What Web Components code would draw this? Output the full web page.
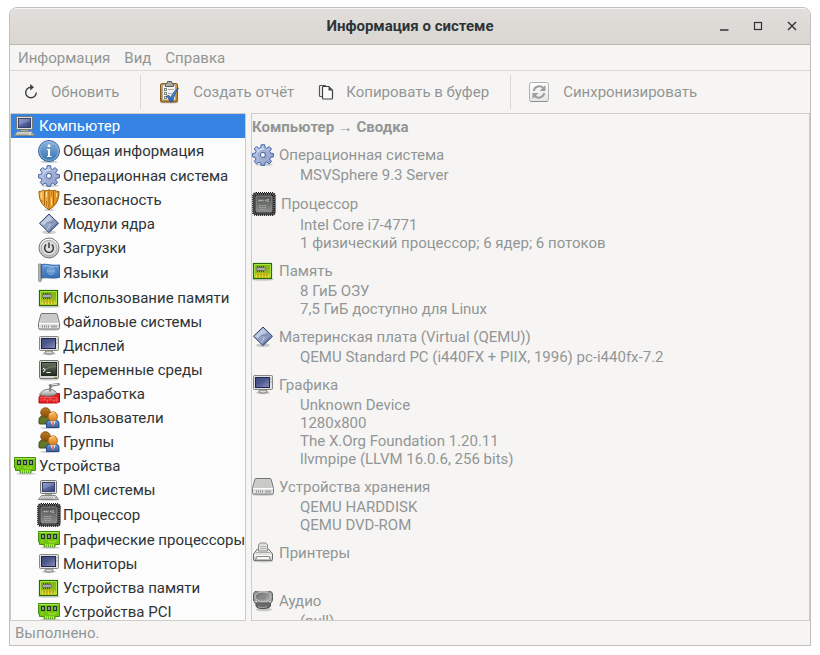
<!DOCTYPE html>
<html lang="ru">
<head>
<meta charset="utf-8">
<meta name="viewport" content="width=device-width, initial-scale=1">
<title>Информация о системе</title>
<style>
    html, body {
        height: 100%;
    }
    body {
        box-sizing: border-box;
        margin: 0;
        padding: 7px 9px 9px;
        background: #ffffff;
        font-family: Roboto, "Noto Sans", sans-serif;
        font-size: 15px;
        line-height: 18px;
    }
</style>
</head>
<body>
<info-window heading="Информация о системе">
    <info-menubar slot="menu">
        <info-menu label="Информация"></info-menu>
        <info-menu label="Вид"></info-menu>
        <info-menu label="Справка"></info-menu>
    </info-menubar>
    <info-toolbar slot="toolbar">
        <tool-button icon="refresh" size="16">Обновить</tool-button>
        <tool-separator></tool-separator>
        <tool-button icon="report" size="24">Создать отчёт</tool-button>
        <tool-button icon="copy" size="16">Копировать в буфер</tool-button>
        <tool-separator></tool-separator>
        <tool-button icon="sync" size="24">Синхронизировать</tool-button>
    </info-toolbar>
    <info-tree slot="tree">
        <tree-row icon="computer" selected>Компьютер</tree-row>
        <tree-row icon="info" size="24" child>Общая информация</tree-row>
        <tree-row icon="gear" child>Операционная система</tree-row>
        <tree-row icon="shield" child>Безопасность</tree-row>
        <tree-row icon="module" child>Модули ядра</tree-row>
        <tree-row icon="power" child>Загрузки</tree-row>
        <tree-row icon="flag" size="24" child>Языки</tree-row>
        <tree-row icon="memory" child>Использование памяти</tree-row>
        <tree-row icon="drive" child>Файловые системы</tree-row>
        <tree-row icon="monitor" child>Дисплей</tree-row>
        <tree-row icon="terminal" child>Переменные среды</tree-row>
        <tree-row icon="devel" child>Разработка</tree-row>
        <tree-row icon="users" child>Пользователи</tree-row>
        <tree-row icon="users" child>Группы</tree-row>
        <tree-row icon="card">Устройства</tree-row>
        <tree-row icon="computer" child>DMI системы</tree-row>
        <tree-row icon="cpu" size="24" child>Процессор</tree-row>
        <tree-row icon="card" child>Графические процессоры</tree-row>
        <tree-row icon="monitor" child>Мониторы</tree-row>
        <tree-row icon="memory" child>Устройства памяти</tree-row>
        <tree-row icon="card" child>Устройства PCI</tree-row>
    </info-tree>
    <info-summary slot="detail" heading="Компьютер → Сводка">
        <summary-section icon="gear" label="Операционная система">
            <div>MSVSphere 9.3 Server</div>
        </summary-section>
        <summary-section icon="cpu" size="24" label="Процессор">
            <div>Intel Core i7-4771</div>
            <div>1 физический процессор; 6 ядер; 6 потоков</div>
        </summary-section>
        <summary-section icon="memory" label="Память">
            <div>8 ГиБ ОЗУ</div>
            <div>7,5 ГиБ доступно для Linux</div>
        </summary-section>
        <summary-section icon="module" label="Материнская плата (Virtual (QEMU))">
            <div>QEMU Standard PC (i440FX + PIIX, 1996) pc-i440fx-7.2</div>
        </summary-section>
        <summary-section icon="monitor" label="Графика">
            <div>Unknown Device</div>
            <div>1280x800</div>
            <div>The X.Org Foundation 1.20.11</div>
            <div>llvmpipe (LLVM 16.0.6, 256 bits)</div>
        </summary-section>
        <summary-section icon="drive" label="Устройства хранения">
            <div>QEMU HARDDISK</div>
            <div>QEMU DVD-ROM</div>
        </summary-section>
        <summary-section icon="printer" label="Принтеры"></summary-section>
        <summary-section icon="speaker" label="Аудио">
            <div>(null)</div>
        </summary-section>
    </info-summary>
    <span slot="status">Выполнено.</span>
</info-window>

<script>
const linear = (id, from, to, dir = 'x2="0" y2="1"') =>
    `<linearGradient id="${id}" ${dir}><stop stop-color="${from}"/><stop offset="1" stop-color="${to}"/></linearGradient>`;

const shadow = (cx, cy, rx, ry) =>
    `<ellipse cx="${cx}" cy="${cy}" rx="${rx}" ry="${ry}" fill="#000" opacity=".18"/>`;

// Each entry is [viewBox side, markup]
const ICONS = {
    refresh: [16, `
        <path d="M8 3.2A5.3 5.3 0 1 0 13.3 8.6" fill="none" stroke="#3d4042" stroke-width="1.4"/>
        <path d="M7.2 0v6.4L11 3.2z" fill="#3d4042"/>`],
    report: [24, `
        <defs>${linear('b', '#e0a64b', '#b37416')}${linear('v', '#7ea6dc', '#2b5fae')}</defs>
        ${shadow(12, 22.3, 10, 1.3)}
        <rect x="3.5" y="3.5" width="17" height="18.5" rx="1.5" fill="url(#b)" stroke="#8a5910"/>
        <rect x="5.5" y="5" width="13" height="15" fill="#f3f3f1" stroke="#a7a7a3"/>
        <path d="M8.5 4.5v-1l2-.5V1.5h4V3l2 .5v3h-8z" fill="#a9aba6" stroke="#5c5e5a"/>
        <g fill="#fff" stroke="#81837f"><rect x="7.5" y="8.5" width="2" height="2"/><rect x="7.5" y="12.5" width="2" height="2"/><rect x="7.5" y="16.5" width="2" height="2"/></g>
        <path d="M11 9.5h6M11 13.5h4M11 17.5h2" stroke="#aaaca8"/>
        <path d="M9.5 16l2.5-.5 1.700 2.300C15.500 13.500 18 10 21.500 8c-2.700 4-4.500 8-6 13.500l-2.300.5c-1-2.500-2-4.300-3.700-6z" fill="url(#v)" stroke="#204a87" stroke-width=".8"/>`],
    copy: [16, `
        <path d="M4 12.500H2.500a1 1 0 0 1-1-1v-9a1 1 0 0 1 1-1H8" fill="none" stroke="#55585a" stroke-width="1.200"/>
        <path d="M5.500 2.500h5.200L14.500 6.300V14a1 1 0 0 1-1 1h-8a1 1 0 0 1-1-1V3.500a1 1 0 0 1 1-1z" fill="#fafafa" stroke="#3d4042" stroke-width="1.200"/>
        <path d="M10.500 3v3.500H14z" fill="#3d4042"/>`],
    sync: [24, `
        <defs>${linear('s', '#ffffff', '#e5e5e5')}</defs>
        <rect x="2.500" y="2.500" width="19" height="19" rx="2" fill="url(#s)" stroke="#b0b0b0"/>
        <path d="M3.500 21.500h17" stroke="#8f8f8f"/>
        <g fill="none" stroke="#9c9e9c" stroke-width="2"><path d="M6.800 11c.6-5 7-6 9.500-2.800M17.200 13c-.6 5-7 6-9.500 2.800"/></g>
        <path d="M18.500 5v6h-6zM5.500 19v-6h6z" fill="#9c9e9c"/>`],
    computer: [22, `
        <defs>${linear('s', '#8292c2', '#303c7c', 'x2="1" y2="1"')}${linear('k', '#f4f4f2', '#c3c4c0')}</defs>
        ${shadow(11, 20.500, 10.500, 1.300)}
        <rect x="2.500" y="1.500" width="16" height="13" rx="1" fill="#dedfdb" stroke="#777975"/>
        <rect x="4.500" y="3.500" width="12" height="9" fill="url(#s)" stroke="#39426f"/>
        <path d="M5 4h11v2L5 10z" fill="#fff" opacity=".16"/>
        <path d="M7 15h7v2H7z" fill="#a8aaa6"/>
        <path d="M3.500 16.500h14l3 4H.5z" fill="url(#k)" stroke="#858783"/>
        <path d="M4 18h12M3 19.500h11" stroke="#a2a49f" stroke-dasharray="1.500 .5"/>
        <path d="M17 18.500h2" stroke="#888"/>`],
    info: [24, `
        <defs>${linear('i', '#8db3dd', '#3471ad')}</defs>
        ${shadow(12, 22.800, 9, 1.200)}
        <circle cx="12" cy="12" r="10.500" fill="url(#i)" stroke="#3465a4"/>
        <circle cx="12" cy="12" r="9.400" fill="none" stroke="#a8c8e8" stroke-opacity=".7"/>
        <circle cx="12" cy="6.700" r="1.500" fill="#fff"/>
        <path d="M10 10h3v7h1.500v1H10v-1h1v-6h-1z" fill="#fff"/>`],
    gear: [22, `
        <defs>${linear('g', '#c7d4ee', '#8a96c6', 'x2="1" y2="1"')}</defs>
        ${shadow(12, 20.600, 9, 1.200)}
        <path d="M9.200.7h3.400l.5 3 1.600.7 2.500-1.800 2.300 2.400L17.700 7.400l.7 1.700 3 .5v3.300l-3 .5-.7 1.600 1.800 2.500-2.300 2.400-2.500-1.800-1.600.7-.5 2.600H9.200l-.5-2.600-1.700-.7-2.500 1.800-2.300-2.400L4 15l-.7-1.600-2.700-.5V9.600l2.700-.5L4 7.400 2.200 5l2.300-2.400L7 4.400l1.700-.7z" fill="url(#g)" stroke="#3f66a8"/>
        <circle cx="10.900" cy="10.900" r="4.600" fill="none" stroke="#99a5cd"/>
        <circle cx="10.900" cy="10.900" r="2.500" fill="#fff" stroke="#5773a8" stroke-width="1.200"/>
        <path d="M5.500 8.500C7 5.500 9 4.800 12 5" fill="none" stroke="#fff" opacity=".7"/>`],
    shield: [22, `
        <defs>${linear('w', '#f8bb57', '#de8917', 'x2="1" y2="0"')}</defs>
        ${shadow(11, 21, 5, .9)}
        <path d="M1 2.500c2 0 3-.4 4-1.500 2 1.300 4 1 6-.3 2 1.300 4 1.600 6 .3 1 1.100 2 1.500 4 1.500 0 4-.6 7.500-2.200 10.500C17 16.500 14 19 11 20.700 8 19 5 16.500 3.200 13 1.600 10 1 6.500 1 2.500z" fill="url(#w)" stroke="#965d08"/>
        <path d="M6.500 2v14M11 1.500v18.500M15.500 2v14" stroke="#a8680c"/>
        <path d="M3.500 4v5M8.500 3v5M13.500 9v7M18.500 4v4" stroke="#ffdc98"/>
        <path d="M8.500 12v5M13.500 3.500v3M4 11v2" stroke="#be7713"/>`],
    module: [22, `
        <defs>${linear('m', '#c2cbe0', '#6b7eac', 'x2="1" y2="1"')}</defs>
        ${shadow(11, 19.300, 7, 1.800)}
        <path d="M11 1l9.500 9.300L11 19.600 1.500 10.300z" fill="url(#m)" stroke="#2d406f"/>
        <path d="M11 2.700L3.200 10.300l2.300 2.200C8 12 9 8 13 7.500c1.500-.4 2-1 1.700-1.200z" fill="#e0e6f2" opacity=".5"/>
        <path d="M5.500 13c3-1 2-4 6-3.500s4-2 5-3" fill="none" stroke="#7285b1"/>
        <path d="M9 17c1-2.500 3-3 3-6" fill="none" stroke="#c8d1e5"/>
        <path d="M11 18.500l8.300-8.200" stroke="#4d6295"/>`],
    power: [22, `
        <defs>${linear('p', '#ffffff', '#b8b8b8')}</defs>
        <circle cx="11" cy="11" r="10" fill="url(#p)" stroke="#777"/>
        <circle cx="11" cy="11" r="7.700" fill="#dededd" stroke="#adadad"/>
        <path d="M8.300 7.500a4.400 4.400 0 1 0 5.400 0M11 5.500v5.500" fill="none" stroke="#2e3436" stroke-width="1.400"/>`],
    flag: [24, `
        <defs>${linear('f', '#6698d2', '#376eb4')}${linear('p', '#ddd', '#666', 'x2="1" y2="0"')}</defs>
        <path d="M1.500 3h3v16l-1.500 2-1.500-1z" fill="url(#p)" stroke="#858d8b" stroke-width=".8"/>
        <path d="M4.500 3.500c6-1 9 1.500 18 .5v12.500c-7 1.500-11-.5-18 .5z" fill="url(#f)" stroke="#3465a4"/>
        <path d="M6 5c5-.7 8 1 15 .5" fill="none" stroke="#9abfe9"/>
        <g fill="none" stroke="#8fb6e2"><circle cx="14" cy="10" r="3.500"/><circle cx="14" cy="10" r="1.500"/><path d="M10.500 10h7"/></g>
        <path d="M3 17l1 4" stroke="#aaa"/>`],
    memory: [22, `
        <defs>${linear('m', '#7cb813', '#aab51c')}${linear('y', '#c3bd1c', '#fff23c')}</defs>
        ${shadow(11, 19.500, 11, 1.300)}
        <rect x="1.500" y="3.500" width="18" height="15" fill="url(#m)" stroke="#236c06" stroke-width="1.200"/>
        <path d="M3.500 13h14v4.500h-14z" fill="url(#y)"/>
        <path d="M6 17.500v-4M9 17.500v-4M12 17.500v-4M15 17.500v-4" stroke="#8e8c0d"/>
        <path d="M5 6.500h8M5 11.500h8" stroke="#404440" stroke-dasharray="1 1"/>
        <rect x="4.500" y="7.500" width="9" height="3" rx="1" fill="#a9ada9" stroke="#646a64"/>
        <path d="M2.500 17.500v-13h16v13" fill="none" stroke="#a6e345"/>`],
    drive: [22, `
        <defs>${linear('d', '#c9c9c9', '#efefef')}</defs>
        ${shadow(11, 18.700, 11, 1.100)}
        <path d="M4 2.500h14q1 0 1.200 1l2.300 9v4q0 1.500-1.500 1.500H2Q.5 18 .5 16.500v-4l2.300-9q.2-1 1.200-1z" fill="url(#d)" stroke="#737573"/>
        <path d="M4 4h14l1.800 8H2.200z" fill="#c9cac8"/>
        <path d="M1 12.500h20" stroke="#fff"/>
        <path d="M1.500 13.500h19v3h-19z" fill="#dedfdd"/>
        <path d="M4 15.500h8" stroke="#888" stroke-width="2" stroke-dasharray="1 1"/>
        <path d="M13 15.500h6" stroke="#a3a5a3" stroke-width="2"/>`],
    monitor: [22, `
        <defs>${linear('s', '#27306c', '#8790ba', 'x2="1" y2="1"')}</defs>
        ${shadow(11, 18.800, 7, 1.400)}
        <rect x="1.500" y="1.500" width="19" height="14" rx="1" fill="#e1e2df" stroke="#858783"/>
        <rect x="3.500" y="3.500" width="14" height="10" fill="url(#s)" stroke="#20264f"/>
        <path d="M4 4h13v2C10 6.500 9 10 4 10z" fill="#4c588f" opacity=".65"/>
        <path d="M18.500 5h1M18.500 8h1" stroke="#777"/>
        <path d="M8 16h6l1.500 2c-2.500 1.500-6.500 1.500-9 0z" fill="#d8d9d6" stroke="#7d807b"/>`],
    terminal: [22, `
        <defs>${linear('s', '#65725d', '#252d22')}</defs>
        ${shadow(11, 20.500, 10, 1)}
        <rect x="1.500" y="1.500" width="19" height="18" rx="1.500" fill="#d8d9d5" stroke="#70736e"/>
        <rect x="3.500" y="3.500" width="15" height="13" fill="url(#s)" stroke="#22291e"/>
        <path d="M4 10.500c6 0 7-3 14-3" fill="none" stroke="#78826b"/>
        <path d="M5 9l2.500 2L5 13M8.500 13.500h4" fill="none" stroke="#fff"/>
        <path d="M16 18.500h3" stroke="#6b9f3d"/>`],
    devel: [22, `
        <defs>${linear('t', '#f7f7f5', '#8d918f')}</defs>
        <path d="M1 14l3-3.500h17.500V19L19 20H1z" fill="#e11e20" stroke="#b80f12"/>
        <path d="M1.500 14.500H19M2 17h17M6.500 14.500V17M12.500 14.500V17M9.500 17v2.500M16 17v2.500M19 14.500V20" stroke="#f65a5a"/>
        <path d="M3 9.500c3-3.500 9-4.500 14-1.500l2 2.500c-4 3-12 3.500-17.500 1z" fill="url(#t)" stroke="#777b78"/>
        <path d="M12.500 8.500c-1-2-.5-4 1-5.500" fill="none" stroke="#7d827f" stroke-width="2"/>
        <path d="M12 2.500l8.500-1.200" stroke="#747978" stroke-width="2.500" stroke-linecap="round"/>
        <path d="M13 2l7-.9" stroke="#eee"/>`],
    users: [22, `
        <defs>${linear('h', '#c17d25', '#884b06')}${linear('f', '#fac16d', '#d87716')}${linear('b', '#7297cc', '#3465a4')}</defs>
        ${shadow(12, 21, 10, .9)}
        <path d="M1 16.500v-4c0-2.500 2.500-4 6-4s6 1.500 6 4V17H2z" fill="#61752d" stroke="#3e501b"/>
        <circle cx="7.500" cy="5.500" r="4.700" fill="url(#h)" stroke="#80480a"/>
        <path d="M8.500 20.500v-4c0-2.500 2-4 6.200-4s6.300 1.500 6.300 4v4z" fill="url(#b)" stroke="#204a87"/>
        <path d="M12 13l3 7 3-7z" fill="#fff"/><path d="M15 15v5" stroke="#c22" stroke-width="1.200"/>
        <circle cx="14.800" cy="9.500" r="4.600" fill="url(#f)" stroke="#b1630f"/>
        <path d="M11.500 8c1.500-2.500 4-2.500 5-1.800" stroke="#ffe0a7" fill="none"/>`],
    card: [22, `
        ${shadow(12, 18.800, 10, 1)}
        <path d="M.5 2.500h21v13H17v2.300H6v-2.300H1.500V13h-1z" fill="#72c413" stroke="#438d0c"/>
        <path d="M1 3.500h20" stroke="#a1e74a"/>
        <path d="M4 11v3M11 11v2h6M17 11v2" fill="none" stroke="#a7e332"/>
        <g fill="#8d998d" stroke="#253329"><rect x="3.500" y="5.500" width="3" height="4"/><rect x="9.500" y="5.500" width="3" height="4"/><rect x="15.500" y="5.500" width="3" height="4"/></g>
        <path d="M7.500 18v-3M9.500 18v-3M11.500 18v-3M13.500 18v-3M15.500 18v-3" stroke="#d9dc38"/>`],
    cpu: [24, `
        <defs>${linear('c', '#505250', '#8b8e8b')}</defs>
        <rect x="1" y="1" width="22" height="22" rx="3" fill="#222" stroke="#111" stroke-width="2" stroke-dasharray="1 1"/>
        <rect x="2" y="2" width="20" height="20" rx="2" fill="none" stroke="#b8b8b8" stroke-width="1" stroke-dasharray="1 1"/>
        <rect x="4" y="4" width="16" height="16" rx="1" fill="url(#c)" stroke="#8b8d8b"/>
        <path d="M6.500 8.500h5M13 8.500h1.500M16 7v3" stroke="#b9bbb9" stroke-width="1.500" stroke-dasharray="1.500 .4"/>
        <path d="M7 13.500h8M7 15.500h7M8 17.500h6" stroke="#a0a2a0" stroke-dasharray="2 .6"/>`],
    printer: [22, `
        <defs>${linear('p', '#f7f7f5', '#c8c9c5')}</defs>
        ${shadow(11, 19.300, 10, 1.100)}
        <path d="M5.500 7h11l4 5v5.500q0 1-1 1h-17q-1 0-1-1V12z" fill="url(#p)" stroke="#686a66"/>
        <path d="M6.500 2.500l2-1.500h5l2 1.500v6.500h-9z" fill="#e0e1dd" stroke="#898b87"/>
        <path d="M8 4.500h6M8 6.500h6" stroke="#b5b7b2"/>
        <path d="M4 10.500h14" stroke="#a9aba7"/>
        <path d="M2 13.500h18" stroke="#fff"/>
        <path d="M5 14.500h12l1.500 3.500h-15z" fill="#fafaf8" stroke="#858782"/>`],
    speaker: [22, `
        <defs>${linear('s', '#666', '#b5b5b5', 'x2="1" y2="1"')}</defs>
        ${shadow(12, 19.500, 8, 1.800)}
        <path d="M4 12v4c1 3.500 13 3.500 14.500 0v-4z" fill="#686a68" stroke="#4b4d4b"/>
        <path d="M1.500 3.500l1.500-2 4 .5h8l4-.5 1.500 2v7l-2 3-4-.5h-7l-4 .5-2-3z" fill="#979997" stroke="#5c5e5c"/>
        <ellipse cx="11" cy="6.800" rx="8" ry="4.800" fill="url(#s)" stroke="#c6c6c6"/>
        <ellipse cx="10.500" cy="7.500" rx="3.500" ry="2" fill="#888"/>
        <path d="M3 11.500h2M17 11.500h2" stroke="#ddd"/>
        <path d="M6 16.500c3 1.500 6 1.500 9 0" fill="none" stroke="#aaa"/>`],
    minimize: [16, `<path d="M4 12h8.500" stroke="#2e3436" stroke-width="1.300"/>`],
    maximize: [16, `<rect x="4.500" y="4.500" width="7" height="7" fill="none" stroke="#2e3436" stroke-width="1.200"/>`],
    close: [16, `<path d="M4 4l8 8M12 4l-8 8" stroke="#2e3436" stroke-width="1.400"/>`]
};

class InfoIcon extends HTMLElement {
    constructor() {
        super();
        this.attachShadow({ mode: 'open' });
    }

    connectedCallback() {
        const [box, markup] = ICONS[this.getAttribute('name')];
        const size = this.getAttribute('size') || 22;
        this.shadowRoot.innerHTML = `
        <style>
            :host {
                display: block;
                flex: none;
            }
            svg {
                display: block;
            }
        </style>
        <svg width="${size}" height="${size}" viewBox="0 0 ${box} ${box}" aria-hidden="true">${markup}</svg>
    `;
    }
}

class InfoWindow extends HTMLElement {
    constructor() {
        super();
        this.attachShadow({ mode: 'open' });
    }

    connectedCallback() {
        this.shadowRoot.innerHTML = `
        <style>
            :host {
                box-sizing: border-box;
                display: flex;
                flex-direction: column;
                height: 100%;
                overflow: hidden;
                border: 1px solid #c2c0be;
                border-radius: 8px 8px 0 0;
                background: #f6f5f4;
                color: #929595;
            }
            header {
                display: grid;
                grid-template-columns: 1fr auto 1fr;
                align-items: center;
                height: 36px;
                flex: none;
                border-bottom: 1px solid #bfb8b1;
                background: linear-gradient(#e1dedb, #dad6d2);
                box-shadow: inset 0 1px #f5f4f3;
                color: #2e3436;
            }
            h1 {
                grid-column: 2;
                margin: 0;
                font-size: 15px;
                font-weight: 700;
            }
            .controls {
                display: flex;
                justify-content: flex-end;
                gap: 10px;
                padding-right: 6px;
            }
            .controls button {
                display: grid;
                place-items: center;
                width: 24px;
                height: 24px;
                padding: 0;
                border: 0;
                border-radius: 4px;
                background: none;
            }
            .controls button:hover {
                background: #ebe9e7;
            }
            main {
                display: grid;
                grid-template-columns: 236px minmax(0, 1fr);
                gap: 5px;
                flex: 1;
                min-height: 0;
            }
            footer {
                flex: none;
                padding: 3px 5px;
            }
        </style>
        <header>
            <h1></h1>
            <div class='controls'>
                <button type='button' aria-label='Свернуть'><info-icon name='minimize' size='16'></info-icon></button>
                <button type='button' aria-label='Развернуть'><info-icon name='maximize' size='16'></info-icon></button>
                <button type='button' aria-label='Закрыть'><info-icon name='close' size='16'></info-icon></button>
            </div>
        </header>
        <slot name='menu'></slot>
        <slot name='toolbar'></slot>
        <main>
            <slot name='tree'></slot>
            <slot name='detail'></slot>
        </main>
        <footer><slot name='status'></slot></footer>
    `;
        this.shadowRoot.querySelector('h1').textContent = this.getAttribute('heading');
    }
}

class InfoMenubar extends HTMLElement {
    constructor() {
        super();
        this.attachShadow({ mode: 'open' });
        this.shadowRoot.innerHTML = `
        <style>
            :host {
                display: block;
                flex: none;
                border-bottom: 1px solid #dad7d4;
            }
            nav {
                display: flex;
            }
        </style>
        <nav><slot></slot></nav>
    `;
    }
}

class InfoMenu extends HTMLElement {
    constructor() {
        super();
        this.attachShadow({ mode: 'open' });
    }

    connectedCallback() {
        this.shadowRoot.innerHTML = `
        <style>
            :host {
                display: block;
            }
            button {
                display: block;
                padding: 4px 6px 3px 8px;
                border: 0;
                background: none;
                color: inherit;
                font: inherit;
            }
        </style>
        <button type='button' aria-haspopup='menu'>${this.getAttribute('label')}</button>
    `;
    }
}

class InfoToolbar extends HTMLElement {
    constructor() {
        super();
        this.attachShadow({ mode: 'open' });
        this.shadowRoot.innerHTML = `
        <style>
            :host {
                display: flex;
                align-items: stretch;
                flex: none;
                height: 34px;
                padding: 4px 0;
            }
        </style>
        <slot></slot>
    `;
    }
}

class ToolButton extends HTMLElement {
    constructor() {
        super();
        this.attachShadow({ mode: 'open' });
    }

    connectedCallback() {
        this.shadowRoot.innerHTML = `
        <style>
            :host {
                display: flex;
            }
            button {
                display: flex;
                align-items: center;
                gap: 12px;
                padding: 0 11px 0 13px;
                border: 0;
                background: none;
                color: inherit;
                font: inherit;
                white-space: nowrap;
            }
        </style>
        <button type='button'>
            <info-icon name='${this.getAttribute('icon')}' size='${this.getAttribute('size')}'></info-icon>
            <slot></slot>
        </button>
    `;
    }
}

class ToolSeparator extends HTMLElement {
    constructor() {
        super();
        this.attachShadow({ mode: 'open' });
        this.shadowRoot.innerHTML = `
        <style>
            :host {
                display: block;
                width: 1px;
                margin: 0 3px 0 10px;
                background: #dad7d4;
            }
        </style>
    `;
    }
}

class InfoTree extends HTMLElement {
    constructor() {
        super();
        this.attachShadow({ mode: 'open' });
        this.shadowRoot.innerHTML = `
        <style>
            :host {
                display: block;
                overflow: auto;
                scrollbar-width: none;
                border: 1px solid #cfcbc7;
                background: #fcfcfc;
                color: #2e3436;
            }
        </style>
        <slot></slot>
    `;
        this.addEventListener('click', (event) => this._select(event.target.closest('tree-row')));
    }

    connectedCallback() {
        this.setAttribute('role', 'tree');
    }

    _select(row) {
        if (!row) {
            return;
        }
        this.querySelectorAll('[selected]').forEach((other) => other.removeAttribute('selected'));
        row.setAttribute('selected', '');
    }
}

class TreeRow extends HTMLElement {
    constructor() {
        super();
        this.attachShadow({ mode: 'open' });
    }

    connectedCallback() {
        this.setAttribute('role', 'treeitem');
        this.setAttribute('aria-level', this.hasAttribute('child') ? 2 : 1);
        this.shadowRoot.innerHTML = `
        <style>
            :host {
                display: block;
            }
            :host([selected]) {
                background: #3584e4;
                color: #ffffff;
            }
            button {
                display: grid;
                grid-template-columns: 24px 1fr;
                gap: 2px;
                align-items: center;
                width: 100%;
                padding: 1px 0 1px 2px;
                border: 0;
                background: none;
                color: inherit;
                font: inherit;
                text-align: left;
                white-space: nowrap;
            }
            :host([child]) button {
                padding-left: 26px;
            }
            info-icon {
                justify-self: center;
            }
        </style>
        <button type='button'>
            <info-icon name='${this.getAttribute('icon')}' size='${this.getAttribute('size') || 22}'></info-icon>
            <span><slot></slot></span>
        </button>
    `;
    }
}

class InfoSummary extends HTMLElement {
    constructor() {
        super();
        this.attachShadow({ mode: 'open' });
    }

    connectedCallback() {
        this.shadowRoot.innerHTML = `
        <style>
            :host {
                display: block;
                overflow: auto;
                scrollbar-width: none;
                border: 1px solid #cfcbc7;
            }
            article {
                display: grid;
                gap: 8px;
                padding-top: 4px;
            }
            h2 {
                margin: 0;
                font-size: 15px;
                font-weight: 700;
            }
        </style>
        <article>
            <h2>${this.getAttribute('heading')}</h2>
            <slot></slot>
        </article>
    `;
    }
}

class SummarySection extends HTMLElement {
    constructor() {
        super();
        this.attachShadow({ mode: 'open' });
    }

    connectedCallback() {
        this.shadowRoot.innerHTML = `
        <style>
            :host {
                display: block;
            }
            h3 {
                display: flex;
                align-items: center;
                gap: 5px;
                margin: 0;
                font-size: 15px;
                font-weight: 400;
            }
            .values {
                min-height: 18px;
                padding-left: 48px;
            }
        </style>
        <h3>
            <info-icon name='${this.getAttribute('icon')}' size='${this.getAttribute('size') || 22}'></info-icon>
            ${this.getAttribute('label')}
        </h3>
        <div class='values'><slot></slot></div>
    `;
    }
}

customElements.define('info-icon', InfoIcon);
customElements.define('info-window', InfoWindow);
customElements.define('info-menubar', InfoMenubar);
customElements.define('info-menu', InfoMenu);
customElements.define('info-toolbar', InfoToolbar);
customElements.define('tool-button', ToolButton);
customElements.define('tool-separator', ToolSeparator);
customElements.define('info-tree', InfoTree);
customElements.define('tree-row', TreeRow);
customElements.define('info-summary', InfoSummary);
customElements.define('summary-section', SummarySection);
</script>
</body>
</html>
